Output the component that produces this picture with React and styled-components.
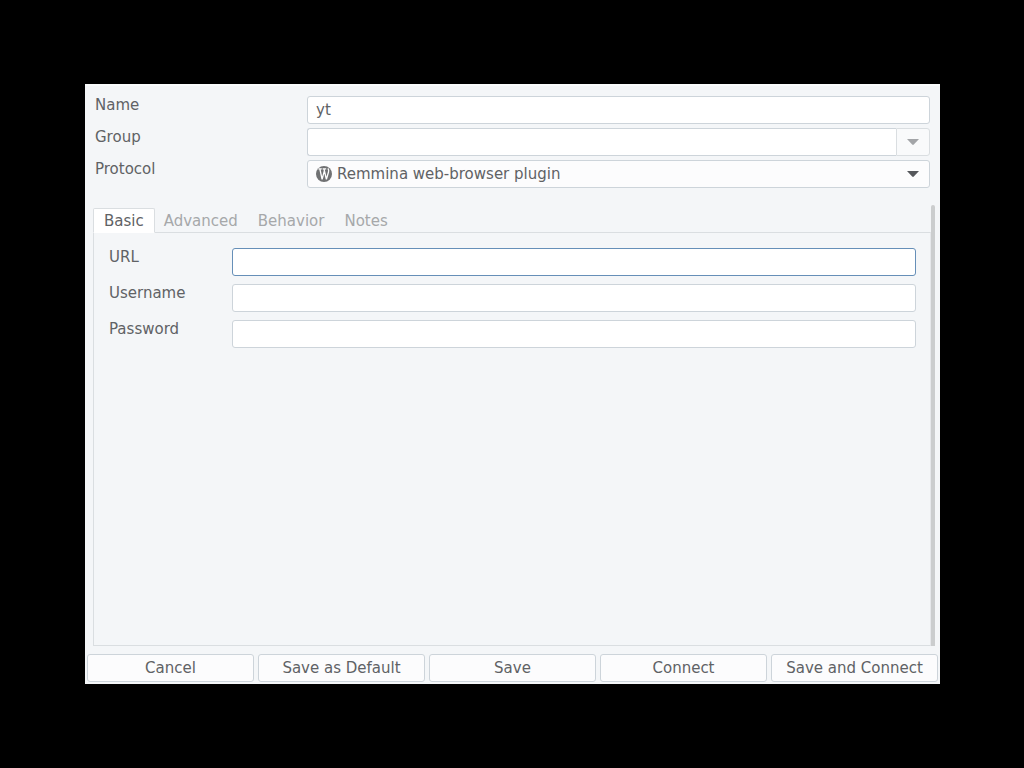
import React, { useState } from "react";
import styled, { createGlobalStyle } from "styled-components";

const c = {
  window: "#f4f6f8",
  text: "#606265",
  muted: "#a6a8aa",
  border: "#cdd4da",
  line: "#dadee1",
  focus: "#668fb8",
};

const GlobalStyle = createGlobalStyle`
  *, *::before, *::after { box-sizing: border-box; }
  body { margin: 0; background: #000; }
  body, input, select, button {
    font-family: "DejaVu Sans", sans-serif;
    font-size: 15px;
    line-height: 18px;
    color: ${c.text};
  }
`;

const Screen = styled.main`
  display: flex;
  min-height: 100vh;
  padding: 84px 84px 84px 85px;
`;

const Dialog = styled.form`
  flex: 1;
  min-width: 0;
  display: flex;
  flex-direction: column;
  background: ${c.window};
  border-top: 2px solid #fafcfc;
`;

const Fields = styled.div`
  display: grid;
  grid-template-columns: ${(p) => p.$labelWidth} minmax(0, 1fr);
  row-gap: ${(p) => p.$gap};
  padding: ${(p) => p.$padding};
`;

const Label = styled.label`
  align-self: start;
`;

const Input = styled.input`
  width: 100%;
  min-width: 0;
  height: 28px;
  padding: 0 8px;
  background: #fff;
  border: 1px solid ${c.border};
  border-radius: 3px;
  outline: none;
  ${(p) => p.$active && `border-color: ${c.focus};`}
  &:focus { border-color: ${c.focus}; }
`;

const Combo = styled.div`
  display: flex;
`;

const ComboInput = styled(Input)`
  flex: 1;
  border-right: 0;
  border-radius: 3px 0 0 3px;
`;

const ComboButton = styled.button`
  display: flex;
  align-items: center;
  justify-content: center;
  width: 34px;
  height: 28px;
  padding: 0;
  color: #a3a5a8;
  background: #f9fafb;
  border: 1px solid ${c.line};
  border-radius: 0 3px 3px 0;
`;

const SelectBox = styled.div`
  position: relative;
  & > svg { position: absolute; top: 0; bottom: 0; margin: auto 0; pointer-events: none; }
  & > svg:first-child { left: 9px; }
  & > svg:last-child { right: 11px; color: #55575b; }
`;

const Select = styled.select`
  appearance: none;
  display: block;
  width: 100%;
  height: 28px;
  padding: 0 32px 0 29px;
  background: #fcfcfd;
  border: 1px solid ${c.border};
  border-radius: 3px;
  outline: none;
`;

const Scroller = styled.div`
  flex: 1;
  display: flex;
  margin: 17px 5px 8px 8px;
`;

const Notebook = styled.section`
  flex: 1;
  min-width: 0;
  display: flex;
  flex-direction: column;
  padding-top: 3px;
`;

const Tabs = styled.div`
  display: flex;
`;

const Tab = styled.button`
  height: 25px;
  margin: 0 -2px -1px 0;
  padding: 0 10px;
  background: transparent;
  border: 1px solid transparent;
  border-radius: 2px 2px 0 0;
  color: ${c.muted};
  &[aria-selected="true"] {
    position: relative;
    color: ${c.text};
    background: #fff;
    border-color: ${c.line};
    border-bottom-color: #fff;
  }
`;

const Page = styled.div`
  flex: 1;
  border: 1px solid ${c.line};
  border-right-color: #e6e8eb;
`;

const ScrollThumb = styled.div`
  width: 4px;
  background: #cbcdce;
  border-radius: 2px 2px 0 0;
`;

const Actions = styled.footer`
  display: grid;
  grid-template-columns: repeat(5, minmax(0, 1fr));
  gap: 4px;
  padding: 0 2px 2px;
`;

const ActionButton = styled.button`
  height: 28px;
  padding: 0;
  white-space: nowrap;
  background: #fcfcfd;
  border: 1px solid ${c.border};
  border-radius: 3px;
`;

const Arrow = () => (
  <svg width="12" height="6" viewBox="0 0 12 6" aria-hidden="true">
    <path d="M0 0H12L6.8 5.6Q6 6.3 5.2 5.6Z" fill="currentColor" />
  </svg>
);

const PluginIcon = () => (
  <svg width="16" height="16" viewBox="0 0 16 16" aria-hidden="true">
    <circle cx="8" cy="8" r="8" fill="#707173" />
    <path
      d="M2.4 2.9H5.8M6.6 2.9H10.2M3.9 3L6.1 13.4L8.4 4.6M8 3L10.4 13.4L12.5 6Q13.1 3.8 11.9 2.3"
      fill="none"
      stroke="#fff"
      strokeWidth="1.3"
    />
  </svg>
);

const tabs = ["Basic", "Advanced", "Behavior", "Notes"];
const settings = [
  { id: "url", label: "URL", type: "text" },
  { id: "username", label: "Username", type: "text" },
  { id: "password", label: "Password", type: "password" },
];
const actions = ["Cancel", "Save as Default", "Save", "Connect", "Save and Connect"];

export default function App() {
  const [tab, setTab] = useState("Basic");
  return (
    <>
      <GlobalStyle />
      <Screen>
        <Dialog onSubmit={(e) => e.preventDefault()}>
          <Fields $labelWidth="212px" $gap="4px" $padding="10px 10px 0">
            <Label htmlFor="name">Name</Label>
            <Input id="name" defaultValue="yt" />
            <Label htmlFor="group">Group</Label>
            <Combo>
              <ComboInput id="group" />
              <ComboButton type="button" aria-label="Show groups">
                <Arrow />
              </ComboButton>
            </Combo>
            <Label htmlFor="protocol">Protocol</Label>
            <SelectBox>
              <PluginIcon />
              <Select id="protocol">
                <option>Remmina web-browser plugin</option>
              </Select>
              <Arrow />
            </SelectBox>
          </Fields>
          <Scroller>
            <Notebook>
              <Tabs role="tablist">
                {tabs.map((t) => (
                  <Tab key={t} type="button" role="tab" aria-selected={t === tab} onClick={() => setTab(t)}>
                    {t}
                  </Tab>
                ))}
              </Tabs>
              <Page role="tabpanel">
                {tab === "Basic" && (
                  <Fields $labelWidth="123px" $gap="8px" $padding="15px 14px 15px 15px">
                    {settings.map((s) => (
                      <React.Fragment key={s.id}>
                        <Label htmlFor={s.id}>{s.label}</Label>
                        <Input id={s.id} type={s.type} $active={s.id === "url"} />
                      </React.Fragment>
                    ))}
                  </Fields>
                )}
              </Page>
            </Notebook>
            <ScrollThumb />
          </Scroller>
          <Actions>
            {actions.map((a) => (
              <ActionButton key={a} type="button">
                {a}
              </ActionButton>
            ))}
          </Actions>
        </Dialog>
      </Screen>
    </>
  );
}
